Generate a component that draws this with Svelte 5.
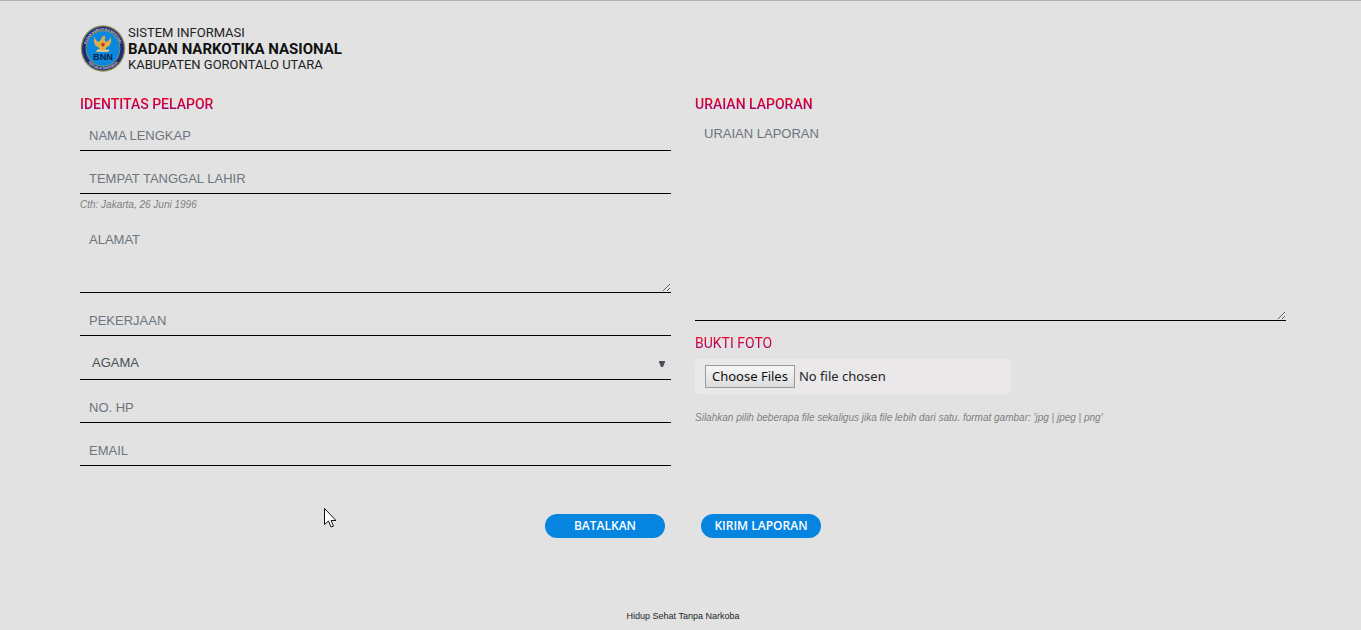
<script>
  let identity = $state({ name: '', birth: '', address: '', job: '', religion: '', phone: '', email: '' });
  let report = $state('');
  const religions = ['ISLAM', 'KRISTEN', 'KATOLIK', 'HINDU', 'BUDHA', 'KONGHUCU'];
</script>

<div class="page">
  <header>
    <svg class="emblem" viewBox="0 0 88 92" aria-hidden="true">
      <defs>
        <path id="arc-top" d="M10 46a34 36 0 0 1 68 0" />
        <path id="arc-bottom" d="M5 46a39 41 0 0 0 78 0" />
      </defs>
      <ellipse cx="44" cy="46" rx="43.500" ry="45.500" fill="#8f9352" />
      <ellipse cx="44" cy="46" rx="41" ry="43" fill="#202a78" />
      <ellipse cx="44" cy="46" rx="33" ry="35" fill="#0a88e0" stroke="#7d8f62" stroke-width="2" />
      <text class="ring"><textPath href="#arc-top" startOffset="50%" text-anchor="middle">BADAN NARKOTIKA NASIONAL</textPath></text>
      <text class="ring"><textPath href="#arc-bottom" startOffset="50%" text-anchor="middle">REPUBLIK INDONESIA</textPath></text>
      <path d="M43 22l4-1 2 4-2 3 2 5c5 0 8-4 10-10l1 10-3 7-8 5 1 3 6 3-2 2-11-1-11 1-2-2 6-3 1-3-8-5-3-7 1-10c2 6 5 10 10 10l3-5z" fill="#dfae49" />
      <path d="M41 35h6v5l-3 3-3-3z" fill="#c33322" />
      <path d="M32 49q12 5 24 0" fill="none" stroke="#ece5c5" stroke-width="2" />
      <text x="44" y="68" class="initials">BNN</text>
    </svg>
    <div class="brand">
      <span>SISTEM INFORMASI</span>
      <strong>BADAN NARKOTIKA NASIONAL</strong>
      <span>KABUPATEN GORONTALO UTARA</span>
    </div>
  </header>

  <form onsubmit={(e) => e.preventDefault()}>
    <div class="columns">
      <section>
        <h2><span class="tint">IDENTITAS PELAPOR</span></h2>
        <input class="field" type="text" placeholder="NAMA LENGKAP" aria-label="NAMA LENGKAP" bind:value={identity.name} />
        <input class="field" type="text" placeholder="TEMPAT TANGGAL LAHIR" aria-label="TEMPAT TANGGAL LAHIR" bind:value={identity.birth} />
        <p class="hint">Cth: Jakarta, 26 Juni 1996</p>
        <textarea class="field address" placeholder="ALAMAT" aria-label="ALAMAT" bind:value={identity.address}></textarea>
        <input class="field" type="text" placeholder="PEKERJAAN" aria-label="PEKERJAAN" bind:value={identity.job} />
        <div class="select">
          <select class="field" aria-label="AGAMA" bind:value={identity.religion}>
            <option value="">AGAMA</option>
            {#each religions as item}
              <option value={item}>{item}</option>
            {/each}
          </select>
          <svg viewBox="0 0 6 6" aria-hidden="true"><path d="M0 0h6v1L4 6H2L0 1z" /></svg>
        </div>
        <input class="field" type="tel" placeholder="NO. HP" aria-label="NO. HP" bind:value={identity.phone} />
        <input class="field" type="email" placeholder="EMAIL" aria-label="EMAIL" bind:value={identity.email} />
      </section>

      <section>
        <h2><label class="tint" for="report">URAIAN LAPORAN</label></h2>
        <textarea id="report" class="field report" placeholder="URAIAN LAPORAN" bind:value={report}></textarea>
        <h2 class="light"><label class="tint" for="photos">BUKTI FOTO</label></h2>
        <input id="photos" class="photos" type="file" accept=".jpg,.jpeg,.png" multiple />
        <p class="hint">Silahkan pilih beberapa file sekaligus jika file lebih dari satu. format gambar: 'jpg | jpeg | png'</p>
      </section>
    </div>

    <div class="actions">
      <button type="reset">BATALKAN</button>
      <button type="submit">KIRIM LAPORAN</button>
    </div>
  </form>

  <footer>Hidup Sehat Tanpa Narkoba</footer>

  <svg class="pointer" viewBox="0 0 12 20" aria-hidden="true">
    <path d="M.5.5v16l4-3.500 2.500 6 2.500-1-2.500-5.500h5z" fill="#fff" stroke="#111" />
  </svg>
</div>

<style>
  :global(body) {
    margin: 0;
    background: #e2e2e2;
  }
  .page {
    position: relative;
    box-sizing: border-box;
    min-height: 100vh;
    padding: 24px 75px 0 80px;
    border-top: 1px solid #b4b4b4;
    font-family: "Liberation Sans", Arial, sans-serif;
  }
  header {
    display: flex;
    gap: 2px;
    height: 47px;
  }
  .emblem {
    width: 46px;
    height: 47px;
  }
  .ring {
    font: bold 6px "Liberation Sans", sans-serif;
    fill: #d4d5df;
  }
  .initials {
    font: bold 18px "Liberation Sans", sans-serif;
    fill: #08244a;
    text-anchor: middle;
  }
  .brand {
    display: flex;
    flex-direction: column;
    font: 13px/16px Roboto, sans-serif;
    color: #222;
    white-space: nowrap;
  }
  .brand strong {
    font-size: 15px;
    color: #111;
  }
  .columns {
    display: grid;
    grid-template-columns: 1fr 1fr;
    gap: 24px;
    margin-top: 24px;
  }
  section {
    display: flex;
    flex-direction: column;
    min-width: 0;
  }
  h2 {
    margin: 0 0 8px;
    font: 500 14px/16px Roboto, sans-serif;
  }
  .light {
    font-weight: 400;
  }
  .tint {
    display: block;
    color: transparent;
    background: linear-gradient(#e8002c 20%, #a00068 85%);
    background-clip: text;
  }
  .field {
    box-sizing: border-box;
    width: 100%;
    height: 31px;
    margin: 0 0 12px;
    padding: 0 9px;
    border: 0;
    border-bottom: 1px solid #000;
    border-radius: 0;
    outline: 0;
    background: transparent;
    color: #495057;
    font: 13px/20px "Liberation Sans", Arial, sans-serif;
  }
  .field::placeholder {
    color: #6c757d;
    opacity: 1;
  }
  .hint {
    margin: -8px 0 8px;
    color: #808080;
    font-size: 10px;
    line-height: 14px;
    font-style: italic;
  }
  textarea.field {
    display: block;
    padding-top: 10px;
    resize: vertical;
  }
  .address {
    height: 73px;
  }
  .report {
    height: 201px;
  }
  textarea.report {
    padding-top: 4px;
    margin-bottom: 14px;
  }
  .select {
    display: grid;
    align-items: center;
  }
  .select select,
  .select svg {
    grid-area: 1 / 1;
  }
  .select select {
    height: 32px;
    padding: 0 24px 2px 12px;
    appearance: none;
  }
  .select svg {
    justify-self: end;
    width: 6px;
    height: 6px;
    margin: 0 6px 12px 0;
    fill: #495057;
    pointer-events: none;
  }
  .photos {
    box-sizing: border-box;
    width: 316px;
    max-width: 100%;
    height: 35px;
    margin-bottom: 25px;
    padding: 6px 10px;
    border-radius: 4px;
    background: #eae8e9;
    color: #212529;
    font: 13px/20px "Noto Sans", sans-serif;
  }
  .photos::file-selector-button {
    height: 23px;
    margin: 0 4px 0 0;
    padding: 0 6px 1px;
    border: 1px solid #999;
    border-radius: 0;
    background: linear-gradient(#f8f8f8, #dcdcdc);
    color: #111;
    font: inherit;
  }
  .actions {
    display: flex;
    justify-content: center;
    gap: 36px;
    margin-top: 36px;
  }
  .actions button {
    width: 120px;
    height: 24px;
    padding: 0;
    border: 0;
    border-radius: 12px;
    background: #0584e0;
    color: #fff;
    font: 600 12px/24px "Open Sans", sans-serif;
  }
  footer {
    margin-top: 72px;
    color: #212529;
    font-size: 9px;
    line-height: 12px;
    text-align: center;
  }
  .pointer {
    position: absolute;
    left: 324px;
    top: 507px;
    width: 12px;
    height: 20px;
  }
</style>
